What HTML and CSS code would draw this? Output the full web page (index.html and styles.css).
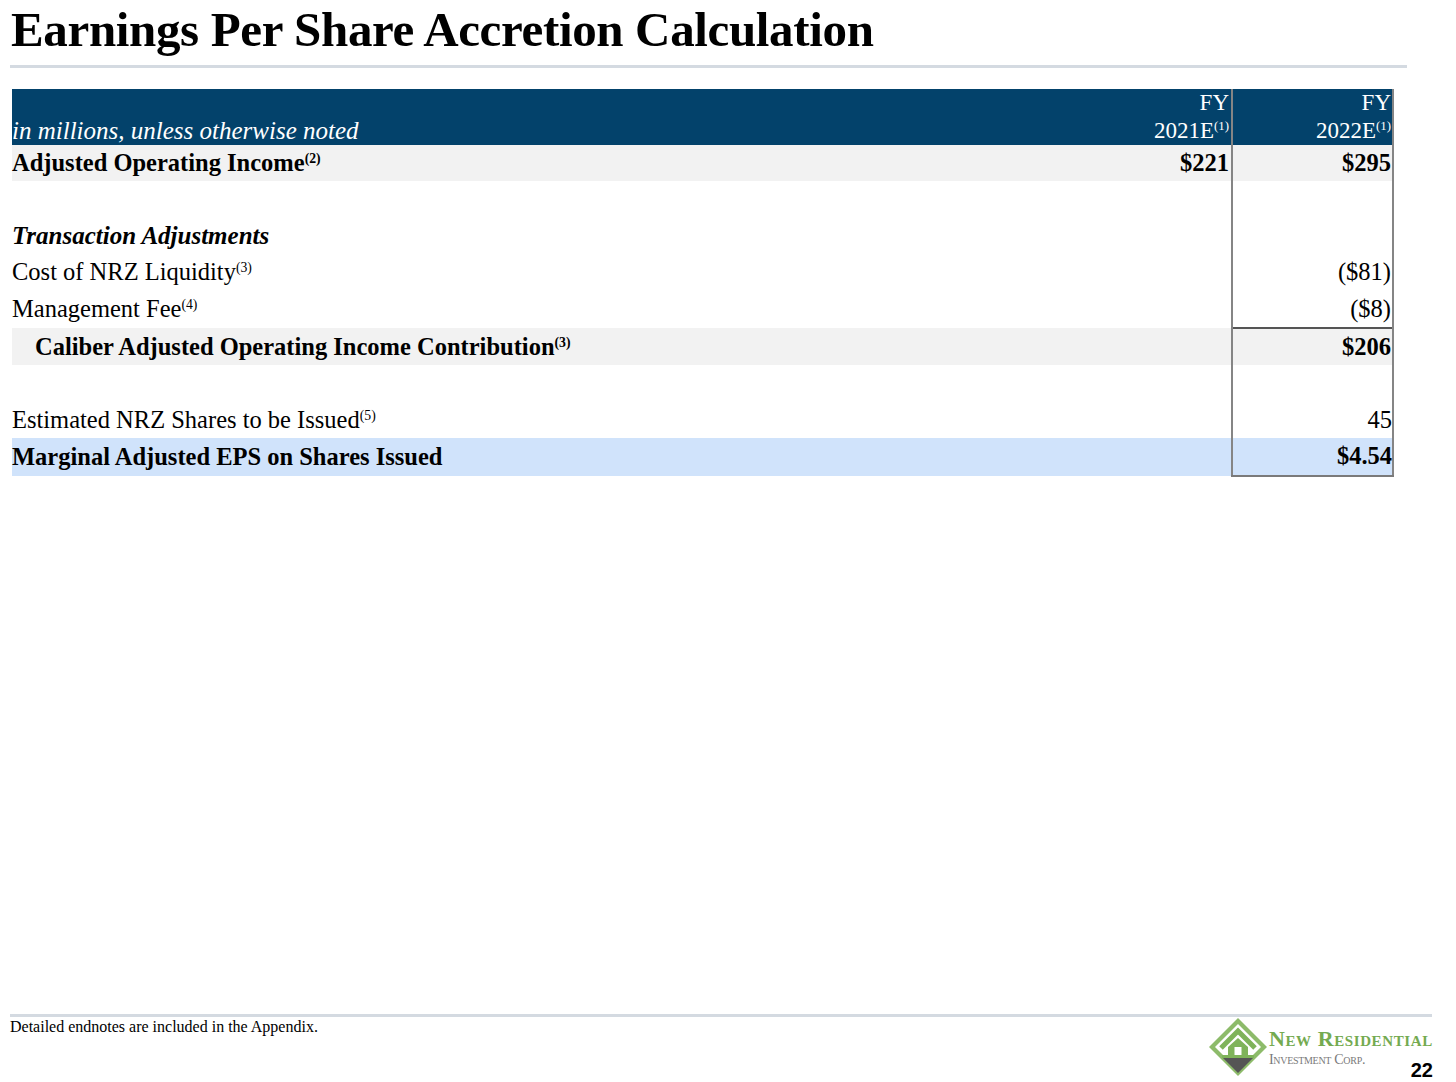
FILE: index.html
```html
<!DOCTYPE html>
<html>
<head>
<meta charset="utf-8">
<link rel="stylesheet" href="styles.css">
</head>
<body>
<div class="page">
  <header class="title-bar">
    <h1 class="title">Earnings Per Share Accretion Calculation</h1>
    <div class="rule"></div>
  </header>

  <table class="eps">
    <colgroup>
      <col class="c-label">
      <col class="c-num">
      <col class="c-num">
    </colgroup>
    <thead>
      <tr class="head">
        <th class="lbl"><span class="note">in millions, unless otherwise noted</span></th>
        <th class="num">FY<br>2021E<sup>(1)</sup></th>
        <th class="num box">FY<br>2022E<sup>(1)</sup></th>
      </tr>
    </thead>
    <tbody>
      <tr class="shade bold">
        <td class="lbl">Adjusted Operating Income<sup>(2)</sup></td>
        <td class="num">$221</td>
        <td class="num box">$295</td>
      </tr>
      <tr class="blank">
        <td class="lbl"></td><td class="num"></td><td class="num box"></td>
      </tr>
      <tr>
        <td class="lbl section">Transaction Adjustments</td>
        <td class="num"></td><td class="num box"></td>
      </tr>
      <tr>
        <td class="lbl">Cost of NRZ Liquidity<sup>(3)</sup></td>
        <td class="num"></td>
        <td class="num box">($81)</td>
      </tr>
      <tr>
        <td class="lbl">Management Fee<sup>(4)</sup></td>
        <td class="num"></td>
        <td class="num box">($8)</td>
      </tr>
      <tr class="shade bold">
        <td class="lbl indent">Caliber Adjusted Operating Income Contribution<sup>(3)</sup></td>
        <td class="num"></td>
        <td class="num box top">$206</td>
      </tr>
      <tr class="blank">
        <td class="lbl"></td><td class="num"></td><td class="num box"></td>
      </tr>
      <tr>
        <td class="lbl">Estimated NRZ Shares to be Issued<sup>(5)</sup></td>
        <td class="num"></td>
        <td class="num box flush">45</td>
      </tr>
      <tr class="blue bold">
        <td class="lbl">Marginal Adjusted EPS on Shares Issued</td>
        <td class="num"></td>
        <td class="num box bottom flush">$4.54</td>
      </tr>
    </tbody>
  </table>

  <footer class="footer">
    <div class="rule foot-rule"></div>
    <div class="foot-row">
      <p class="endnote">Detailed endnotes are included in the Appendix.</p>
      <div class="brand">
        <svg class="logo" width="60" height="60" viewBox="0 0 60 60" aria-hidden="true">
          <polygon points="30,1 59,30 30,59 1,30" fill="#8dbb6a"/>
          <polygon points="30,7 53,30 30,53 7,30" fill="#ffffff"/>
          <polyline points="13,31 30,14 47,31" fill="none" stroke="#7fb35a" stroke-width="5" stroke-linejoin="miter"/>
          <polygon points="20,30 30,21 40,30 40,38 20,38" fill="#7fb35a"/>
          <rect x="26.5" y="30" width="7" height="8" fill="#ffffff"/>
          <rect x="14" y="38" width="32" height="3" fill="#7fb35a"/>
          <polygon points="15,41 45,41 30,56" fill="#555555"/>
        </svg>
        <div class="brand-text">
          <div class="brand-name">New Residential</div>
          <div class="brand-sub">Investment Corp.</div>
        </div>
        <div class="page-num">22</div>
      </div>
    </div>
  </footer>
</div>
</body>
</html>
```

FILE: styles.css
```css
html, body {
  margin: 0;
  padding: 0;
  background: #ffffff;
}

body {
  font-family: "Liberation Serif", "Times New Roman", serif;
  color: #000000;
}

.page {
  width: 1456px;
  height: 1082px;
  display: flex;
  flex-direction: column;
  box-sizing: border-box;
  padding: 0 0 0 10px;
}

.title-bar {
  width: 1397px;
}

.title {
  margin: 0;
  padding: 2px 0 0 1px;
  font-size: 49px;
  line-height: 56px;
  font-weight: bold;
  letter-spacing: -0.35px;
  white-space: nowrap;
}

.rule {
  height: 3px;
  background: #d4dae1;
}

.title-bar .rule {
  margin-top: 7px;
}

.eps {
  margin: 21px 0 0 2px;
  width: 1382px;
  border-collapse: collapse;
  table-layout: fixed;
  font-size: 24.5px;
}

.c-num {
  width: 161px;
}

.eps th,
.eps td {
  padding: 0;
  height: 36.4px;
  line-height: 26px;
  vertical-align: middle;
  white-space: nowrap;
}

.eps .lbl {
  text-align: left;
  padding-left: 0;
}

.eps .num {
  text-align: right;
  padding-right: 2px;
}

.eps .box {
  border-left: 2px solid #858585;
  border-right: 2px solid #858585;
  padding-right: 1px;
}

.eps .box.flush {
  padding-right: 0;
}

.eps .box.top {
  border-top: 2px solid #555555;
}

.eps .box.bottom {
  border-bottom: 2px solid #7a7a7a;
}

.head th {
  background: #03426b;
  color: #ffffff;
  height: 54px;
  font-weight: normal;
  vertical-align: bottom;
  line-height: 28px;
}

.head .note {
  font-style: italic;
  font-size: 25px;
}

.head .num {
  font-size: 23px;
}

.eps sup {
  font-size: 0.56em;
  line-height: 0;
  vertical-align: 0.6em;
}

.shade td {
  background: #f2f2f2;
}

.blue td {
  background: #d0e3fb;
}

.bold td {
  font-weight: bold;
}

.eps .section {
  font-style: italic;
  font-weight: bold;
  font-size: 25px;
}

.eps .indent {
  padding-left: 23px;
}

.footer {
  margin-top: auto;
  width: 1422px;
}

.foot-rule {
  height: 3px;
  background: #d4dae1;
}

.foot-row {
  display: flex;
  justify-content: space-between;
  align-items: flex-start;
}

.endnote {
  margin: 1px 0 0 0;
  font-size: 16px;
  line-height: 18px;
}

.brand {
  display: flex;
  align-items: flex-start;
  margin-top: 0;
  margin-right: -1px;
  padding-bottom: 5px;
}

.logo {
  display: block;
  margin-left: -2px;
}

.brand-text {
  margin-left: 1px;
  margin-top: 11px;
}

.brand-name {
  color: #74aa50;
  font-size: 22px;
  line-height: 22px;
  font-variant: small-caps;
  font-weight: bold;
  letter-spacing: 0.6px;
}

.brand-sub {
  color: #7a7a7a;
  font-size: 14px;
  line-height: 16px;
  font-variant: small-caps;
  margin-top: 2px;
  letter-spacing: -0.3px;
}

.page-num {
  align-self: flex-end;
  margin-left: -22px;
  margin-bottom: -3px;
  font-family: "Liberation Sans", Arial, sans-serif;
  font-weight: bold;
  font-size: 20px;
  line-height: 20px;
}
```
